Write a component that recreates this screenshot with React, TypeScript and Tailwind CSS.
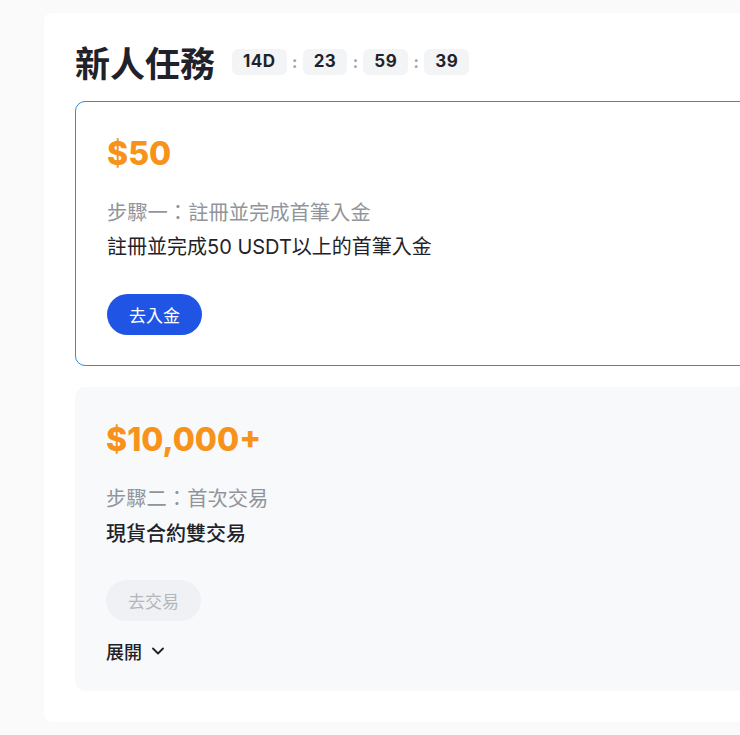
import React from "react";
import { ChevronDown } from "lucide-react";

function TimeBox({ v }: { v: string }) {
  return (
    <div className="h-[26px] px-[11px] flex items-center justify-center rounded-[6px] bg-[#f3f4f6] text-[17px] font-bold tracking-[0.5px] text-[#1f2329] leading-none">
      {v}
    </div>
  );
}

function Colon() {
  return <div className="w-[16px] text-center text-[16px] font-bold text-[#9ca3af] leading-none">:</div>;
}

export default function App() {
  return (
    <div
      lang="zh-TW"
      className="w-[740px] h-[735px] overflow-hidden bg-[#fafafa] font-['Inter','Noto_Sans_CJK_TC','Noto_Sans',sans-serif]"
    >
      <div className="ml-[44px] mt-[13px] h-[709px] w-[800px] bg-white rounded-[8px] pl-[31px] pt-[31px]">
        <div className="flex items-center h-[35px]">
          <h1 className="text-[35px] font-bold leading-none text-[#1f2329] font-['Noto_Sans_CJK_TC',sans-serif]">新人任務</h1>
          <div className="flex items-center ml-[17px]">
            <TimeBox v="14D" />
            <Colon />
            <TimeBox v="23" />
            <Colon />
            <TimeBox v="59" />
            <Colon />
            <TimeBox v="39" />
          </div>
        </div>

        <div className="mt-[22px] w-[800px] h-[265px] rounded-[10px] border border-[#2a8ee3] pl-[31px] pt-[31px]">
          <div className="h-[42px] flex items-center text-[32px] font-extrabold text-[#f7931a] leading-none">$50</div>
          <div className="mt-[22px] h-[28px] flex items-center text-[20.3px] text-[#91959b] font-['Noto_Sans_CJK_TC',sans-serif]">
            步驟一：註冊並完成首筆入金
          </div>
          <div className="mt-[8px] h-[28px] flex items-center text-[20px] text-[#1f2329]">註冊並完成50 USDT以上的首筆入金</div>
          <button className="mt-[33px] h-[41px] w-[95px] rounded-full bg-[#1f54e4] text-white text-[17px] flex items-center justify-center font-['Noto_Sans_CJK_TC',sans-serif]">
            去入金
          </button>
        </div>

        <div className="mt-[21px] w-[800px] h-[304px] rounded-[10px] bg-[#f7f9fb] pl-[31px] pt-[32px]">
          <div className="h-[42px] flex items-center text-[32px] font-extrabold text-[#f7931a] leading-none">$10,000+</div>
          <div className="mt-[22px] h-[28px] flex items-center text-[20.3px] text-[#91959b] font-['Noto_Sans_CJK_TC',sans-serif]">
            步驟二：首次交易
          </div>
          <div className="mt-[8px] h-[28px] flex items-center text-[20px] font-medium text-[#1f2329] font-['Noto_Sans_CJK_TC',sans-serif]">
            現貨合約雙交易
          </div>
          <button className="mt-[33px] h-[41px] w-[95px] rounded-full bg-[#eff1f4] text-[#b3b6bb] text-[17px] flex items-center justify-center font-['Noto_Sans_CJK_TC',sans-serif]">
            去交易
          </button>
          <div className="mt-[18px] h-[24px] flex items-center text-[18px] font-medium text-[#1f2329] gap-[6px] font-['Noto_Sans_CJK_TC',sans-serif]">
            展開
            <ChevronDown size={20} strokeWidth={2.2} />
          </div>
        </div>
      </div>
    </div>
  );
}
